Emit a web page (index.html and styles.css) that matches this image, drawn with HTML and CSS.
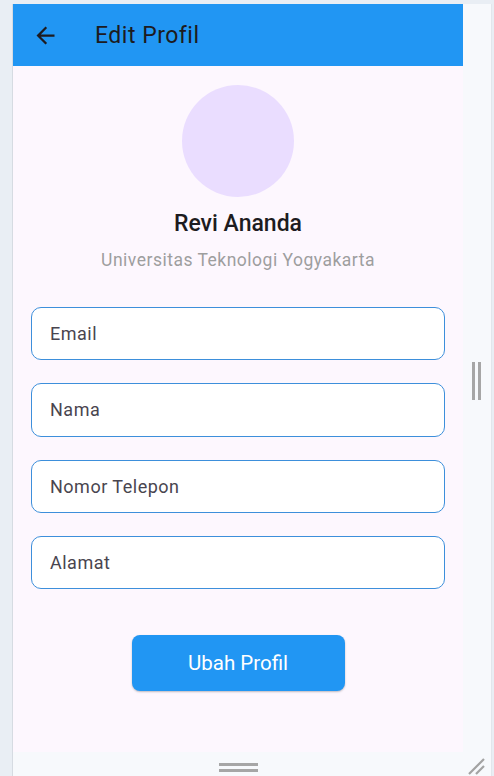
FILE: index.html
```html
<!DOCTYPE html>
<html lang="id">
<head>
<meta charset="utf-8">
<title>Edit Profil</title>
<link rel="stylesheet" href="styles.css">
</head>
<body>
<div class="window">
  <main class="app">
    <header class="appbar">
      <svg class="back" viewBox="0 0 24 24" width="27" height="27" aria-hidden="true"><path d="M20 11H7.83l5.59-5.59L12 4l-8 8 8 8 1.41-1.41L7.83 13H20v-2z"/></svg>
      <h1 class="title">Edit Profil</h1>
    </header>
    <section class="content">
      <div class="avatar"></div>
      <div class="name">Revi Ananda</div>
      <div class="school">Universitas Teknologi Yogyakarta</div>
      <form class="fields">
        <div class="field">Email</div>
        <div class="field">Nama</div>
        <div class="field">Nomor Telepon</div>
        <div class="field">Alamat</div>
      </form>
      <button class="submit" type="button">Ubah Profil</button>
    </section>
  </main>
  <aside class="side">
    <div class="vhandle"><span></span><span></span></div>
  </aside>
  <div class="bottom">
    <div class="hhandle"><span></span><span></span></div>
  </div>
  <div class="corner">
    <svg viewBox="0 0 20 20" width="20" height="20" aria-hidden="true"><path d="M2 18 L17 3 M9 18 L17 10" stroke="#a3a3a3" stroke-width="2.2" fill="none"/></svg>
  </div>
</div>
</body>
</html>
```
FILE: styles.css
```css
* { box-sizing: border-box; }
html, body { margin: 0; padding: 0; }
body {
  background: #e9eef4;
  font-family: Roboto, "Noto Sans", sans-serif;
  height: 776px;
  overflow: hidden;
}
.window {
  margin: 4px 2px 0 12px;
  height: 772px;
  border-left: 1px solid #d6dbe2;
  border-right: 1px solid #e2e6ec;
  background: #f7f9fc;
  display: grid;
  grid-template-columns: 450px 1fr;
  grid-template-rows: 748px 1fr;
}
.app {
  background: #fdf7fe;
  display: flex;
  flex-direction: column;
}
.appbar {
  height: 62px;
  background: #2196f3;
  display: flex;
  align-items: center;
  padding-left: 18.5px;
}
.back { fill: #1d1b20; flex: none; }
.title {
  margin: 0 0 0 36.5px;
  font-size: 23px;
  letter-spacing: 0.5px;
  font-weight: 400;
  color: #1d1b20;
}
.content {
  display: flex;
  flex-direction: column;
  align-items: center;
  padding-top: 19px;
}
.avatar {
  width: 112px;
  height: 112px;
  border-radius: 50%;
  background: #eaddff;
}
.name {
  margin-top: 13px;
  font-size: 23px;
  line-height: 28px;
  font-weight: 500;
  color: #1d1b20;
}
.school {
  margin-top: 10px;
  font-size: 17.5px;
  line-height: 24px;
  letter-spacing: 0.5px;
  color: #9e9e9e;
}
.fields {
  margin: 35px 0 0;
  width: 414px;
  display: flex;
  flex-direction: column;
  gap: 23px;
}
.field {
  height: 53.33px;
  border: 1px solid #3d8fdb;
  border-radius: 10px;
  background: #fff;
  display: flex;
  align-items: center;
  padding-left: 18px;
  font-size: 18px;
  letter-spacing: 0.5px;
  color: #49454f;
}
.submit {
  margin-top: 45.7px;
  width: 213px;
  height: 56px;
  border: none;
  border-radius: 8px;
  background: #2196f3;
  color: #fff;
  font-family: inherit;
  font-size: 20.5px;
  box-shadow: 0 1px 2px rgba(0,0,0,0.25);
}
.side {
  display: flex;
  align-items: center;
  padding-left: 9px;
}
.vhandle {
  display: flex;
  gap: 3px;
  margin-top: 6px;
}
.vhandle span {
  width: 3px;
  height: 38px;
  background: #a6a6a6;
}
.bottom {
  display: flex;
  justify-content: center;
  padding-top: 11px;
}
.hhandle {
  display: flex;
  flex-direction: column;
  gap: 3px;
}
.hhandle span {
  width: 39px;
  height: 3px;
  background: #a6a6a6;
}
.corner {
  display: flex;
  align-items: flex-end;
  justify-content: flex-end;
  padding-right: 4px;
}
```
